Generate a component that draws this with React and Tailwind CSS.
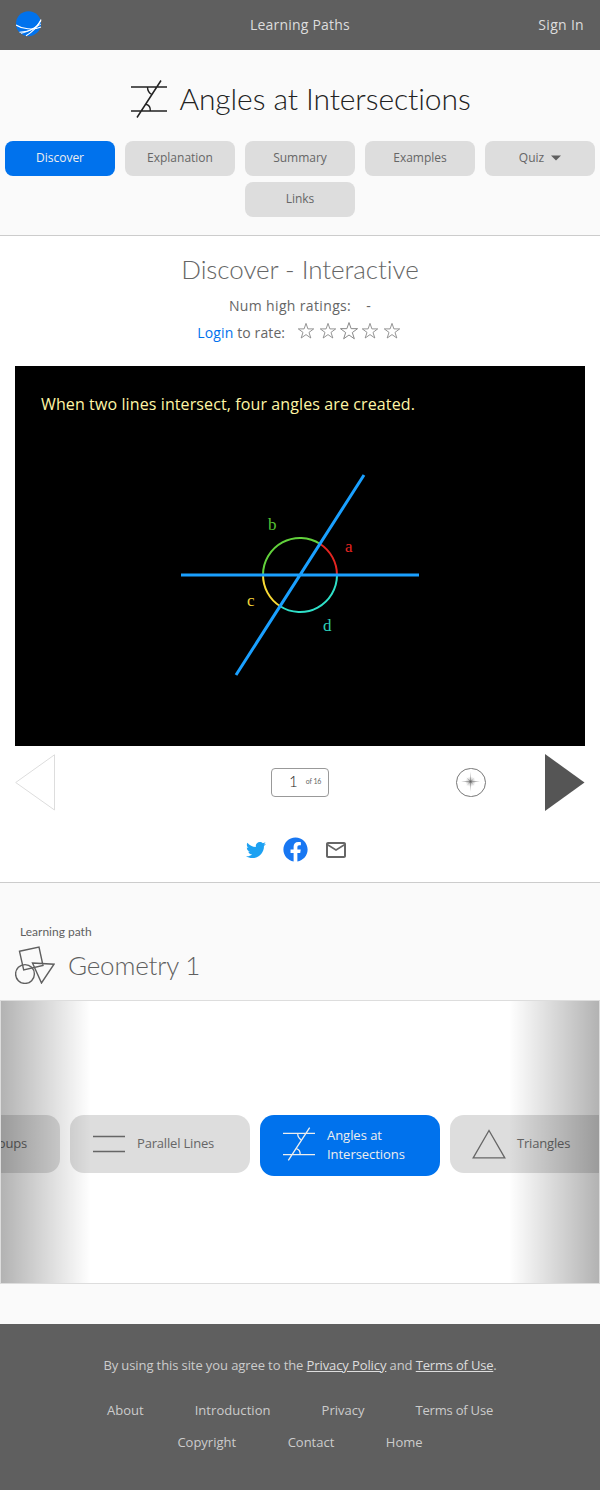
import React from 'react';
import { FaFacebook, FaTwitter } from 'react-icons/fa';
import { MdMailOutline } from 'react-icons/md';

function AnglesIcon({ className }) {
  return (
    <svg viewBox="0 0 36 38" className={className} fill="none" stroke="currentColor" strokeWidth="1.5">
      <path d="M0 7H36M0 31H36M30 0.5L6 37.5" />
      <path d="M16.5 7C16.5 10 18 13 20.8 14.5M15 24.2C18 25 19.5 28 19.3 31" strokeWidth="1.4" />
    </svg>
  );
}

function Logo() {
  return (
    <svg viewBox="0 0 26 26" className="size-[26px]" fill="none">
      <circle cx="12.5" cy="12.7" r="12.5" fill="#0072ed" />
      <g stroke="#fff">
        <path d="M0 14C6 18 17 19.5 25 16" strokeWidth="1.1" />
        <path d="M3.5 21.2C12 21 21 18 25 8.5" strokeWidth="1.1" />
        <path d="M5 22.5C13 20.5 19 16.5 25 13" strokeWidth="0.8" />
        <path d="M10 24.7C16 21.5 21 16 25 9.5" strokeWidth="1.2" />
      </g>
    </svg>
  );
}

const tabs = ['Discover', 'Explanation', 'Summary', 'Examples', 'Quiz', 'Links'];

function Tab({ name }) {
  const active = name === 'Discover';
  return (
    <button
      className={`flex h-[35px] w-[110px] items-center justify-center rounded-lg pb-px text-[12px] ${
        active ? 'bg-[#0072ed] text-[#eee]' : 'bg-[#ddd] text-[#666]'
      }`}
    >
      {name}
      {name === 'Quiz' && (
        <svg viewBox="0 0 10 6" className="ml-[7px] h-[6px] w-[10px]">
          <path d="M0 0.5H10L5 5.5Z" fill="#5f5f5f" />
        </svg>
      )}
    </button>
  );
}

function Star({ className }) {
  return (
    <svg viewBox="0 0 18 18" className={className} fill="none" stroke="#888" strokeWidth="0.9">
      <path d="M9 1.4L10.9 6.9H16.7L12 10.4L13.8 16L9 12.6L4.2 16L6 10.4L1.3 6.9H7.1Z" />
    </svg>
  );
}

function Diagram() {
  return (
    <svg viewBox="0 0 570 380" className="absolute inset-0 h-full w-full" fill="none" strokeWidth="2">
      <path d="M322 209A37 37 0 0 0 305.2 178" stroke="#e52521" />
      <path d="M305.2 178A37 37 0 0 0 248 209" stroke="#62d13c" />
      <path d="M248 209A37 37 0 0 0 264.8 240" stroke="#f9da35" />
      <path d="M264.8 240A37 37 0 0 0 322 209" stroke="#2fe0c8" />
      <path d="M166 209H404M221 309L349 109" stroke="#1aa0ff" strokeWidth="3" />
      <g stroke="none" fontFamily="Liberation Serif, serif" fontSize="17">
        <text x="330" y="186" fill="#e52521">a</text>
        <text x="253" y="164" fill="#55c034">b</text>
        <text x="232" y="240" fill="#f0d238">c</text>
        <text x="308" y="265" fill="#2cd0ba">d</text>
      </g>
    </svg>
  );
}

function Sparkle() {
  return (
    <svg viewBox="0 0 30 30" className="size-full">
      <defs>
        <radialGradient id="glow">
          <stop offset="0" stopColor="#333" stopOpacity="0.8" />
          <stop offset="0.35" stopColor="#555" stopOpacity="0.3" />
          <stop offset="1" stopColor="#777" stopOpacity="0" />
        </radialGradient>
      </defs>
      <circle cx="14.5" cy="14" r="6" fill="url(#glow)" />
      <path
        d="M14.5 3L15.2 13L25 14L15.2 15L14.5 25L13.8 15L4 14L13.8 13ZM10 9.5L14.9 13.5L19 9.5L15 14.4L19 18.5L14.5 14.6L10 18.5L14 14.4Z"
        fill="#666"
        fillOpacity="0.5"
      />
    </svg>
  );
}

function PathCard({ children, label, active, alignEnd }) {
  return (
    <div
      className={`flex w-[180px] shrink-0 items-center rounded-[14px] text-[13px] leading-[19px] tracking-[-0.18px] ${
        active ? 'h-[61px] bg-[#0072ed] text-[#eee]' : 'h-[58px] bg-[#ddd] text-[#666]'
      } ${alignEnd ? 'justify-end pr-[33px]' : 'pl-[23px]'}`}
    >
      {children && <div className="flex w-8 shrink-0 items-center">{children}</div>}
      <div className={active ? 'ml-3 w-[90px] pb-0.5 tracking-[-0.04px]' : 'ml-3 whitespace-nowrap pb-px'}>{label}</div>
    </div>
  );
}

export default function App() {
  return (
    <div className="flex h-[1490px] w-[600px] flex-col overflow-hidden bg-[#fafafa] font-['Open_Sans',sans-serif] text-[#666]">
      <header className="grid h-[50px] shrink-0 grid-cols-3 items-center bg-[#5f5f5f] px-4 text-[14px] tracking-[0.2px] text-[#ddd]">
        <div className="pb-[2px]"><Logo /></div>
        <a className="pb-0.5 text-center">Learning Paths</a>
        <a className="pb-0.5 text-right tracking-[0.3px]">Sign In</a>
      </header>

      <section className="h-[186px] shrink-0 border-b border-[#ccc]">
        <div className="flex h-[91px] items-center justify-center pt-[7px] pl-[2px] text-[#222]">
          <AnglesIcon className="h-[38px] w-9" />
          <h1 className="ml-3 pb-[3px] font-['Lato',sans-serif] text-[30px] font-light leading-none tracking-[-0.08px] whitespace-nowrap">Angles at Intersections</h1>
        </div>
        <nav className="flex flex-wrap justify-center gap-x-[10px] gap-y-[6px]">
          {tabs.map((t) => <Tab key={t} name={t} />)}
        </nav>
      </section>

      <main className="h-[647px] shrink-0 border-b border-[#ccc] bg-white px-[15px]">
        <div className="flex h-[130px] flex-col items-center">
          <h2 className="mt-[17px] font-['Lato',sans-serif] text-[26px] font-light leading-[32px] tracking-[-0.07px]">Discover - Interactive</h2>
          <div className="mt-[9px] flex h-[22px] items-center text-[14px] tracking-[0.35px]">
            <span>Num high ratings:</span>
            <span className="ml-[15px]">-</span>
          </div>
          <div className="mt-[5px] flex h-[22px] items-center pr-[2px] text-[14px] tracking-[0.12px]">
            <span><a className="text-[#0072ed]">Login</a> to rate:</span>
            <span className="-mt-0.5 ml-3 flex items-center gap-[3.5px]">
              <Star className="size-[18px]" />
              <Star className="size-[18px]" />
              <Star className="-ml-px size-5" />
              <Star className="-ml-[1.5px] size-[18px]" />
              <Star className="size-[18px]" />
            </span>
          </div>
        </div>

        <div className="relative h-[380px] bg-black">
          <p className="px-[26px] pt-[26px] text-[16px] tracking-[0.11px] text-[#fff6a6]">When two lines intersect, four angles are created.</p>
          <Diagram />
        </div>

        <div className="flex h-[73px] items-center">
          <svg viewBox="0 0 41 58" className="h-[58px] w-[41px]">
            <path d="M0.7 28.5L39.5 0.8V56Z" fill="none" stroke="#ddd" />
          </svg>
          <div className="ml-[215px] flex h-[29px] w-[58px] items-center rounded border border-[#999] pb-0.5 pl-[17px] font-['Lato',sans-serif]">
            <span className="text-[15px] font-light text-[#222]">1</span>
            <span className="ml-[8px] text-[7px] whitespace-nowrap tracking-[-0.1px]">of 16</span>
          </div>
          <div className="ml-[127px] h-[29px] w-[30px] rounded-full border border-[#777]">
            <Sparkle />
          </div>
          <svg viewBox="0 0 40 58" className="ml-[59px] h-[58px] w-10">
            <path d="M0 0L39.5 28.5L0 57Z" fill="#555" />
          </svg>
        </div>

        <div className="flex items-center pl-[231px] pt-[18px]">
          <FaTwitter size={20} className="text-[#1da1f2]" />
          <FaFacebook size={25} className="ml-[17px] text-[#1877f2]" />
          <MdMailOutline size={24} className="ml-4 text-[#666]" />
        </div>
      </main>

      <section className="shrink-0">
        <div className="h-[117px] pt-[40px] font-['Lato',sans-serif] text-[#5f5f5f]">
          <div className="pl-5 text-[12px] leading-[18px]">Learning path</div>
          <div className="mt-1 flex h-[40px] items-center pl-[15px]">
            <svg viewBox="0 0 40 38" className="h-[38px] w-10" fill="none" stroke="currentColor" strokeWidth="1.4">
              <path d="M4.5 5.3L24 1L28 19.5L8.7 24ZM17.5 17L39 18.2L26.5 37Z" />
              <circle cx="10" cy="28" r="9.4" />
            </svg>
            <h2 className="ml-[13px] text-[26px] font-light tracking-[-0.2px]">Geometry 1</h2>
          </div>
        </div>
        <div className="relative h-[284px] overflow-hidden border border-[#ddd] bg-white">
          <div className="-ml-[121px] flex items-start gap-[10px] pt-[114px]">
            <PathCard alignEnd label="Angle Groups" />
            <PathCard label="Parallel Lines">
              <svg viewBox="0 0 32 18" className="h-[18px] w-8" stroke="currentColor" strokeWidth="1.5">
                <path d="M0 1.5H32M0 16.5H32" />
              </svg>
            </PathCard>
            <PathCard active label="Angles at Intersections"><AnglesIcon className="-mt-1 h-[34px] w-8" /></PathCard>
            <PathCard label="Triangles">
              <svg viewBox="0 0 34 30" className="-mt-px -ml-px h-[30px] w-[34px] shrink-0" fill="none" stroke="currentColor" strokeWidth="1.3">
                <path d="M17 1.5L1.2 28.8H32.8Z" />
              </svg>
            </PathCard>
          </div>
          <div className="absolute inset-y-0 left-0 w-[90px] bg-linear-to-r from-black/30 to-transparent" />
          <div className="absolute inset-y-0 right-0 w-[90px] bg-linear-to-l from-black/30 to-transparent" />
        </div>
      </section>

      <footer className="mt-10 h-[166px] shrink-0 bg-[#5f5f5f] pt-[31px] text-[13px] leading-5 text-[#ccc]">
        <p className="text-center tracking-[-0.1px]">
          By using this site you agree to the <a className="text-[#ddd] underline">Privacy Policy</a> and <a className="tracking-[-0.2px] text-[#ddd] underline">Terms of Use</a>.
        </p>
        <div className="mt-[25px] flex justify-center gap-[51px]">
          <a>About</a><a className="tracking-[0.06px]">Introduction</a><a>Privacy</a><a className="tracking-[-0.2px]">Terms of Use</a>
        </div>
        <div className="mt-3 flex justify-center gap-[51.5px]">
          <a>Copyright</a><a>Contact</a><a>Home</a>
        </div>
      </footer>
    </div>
  );
}
